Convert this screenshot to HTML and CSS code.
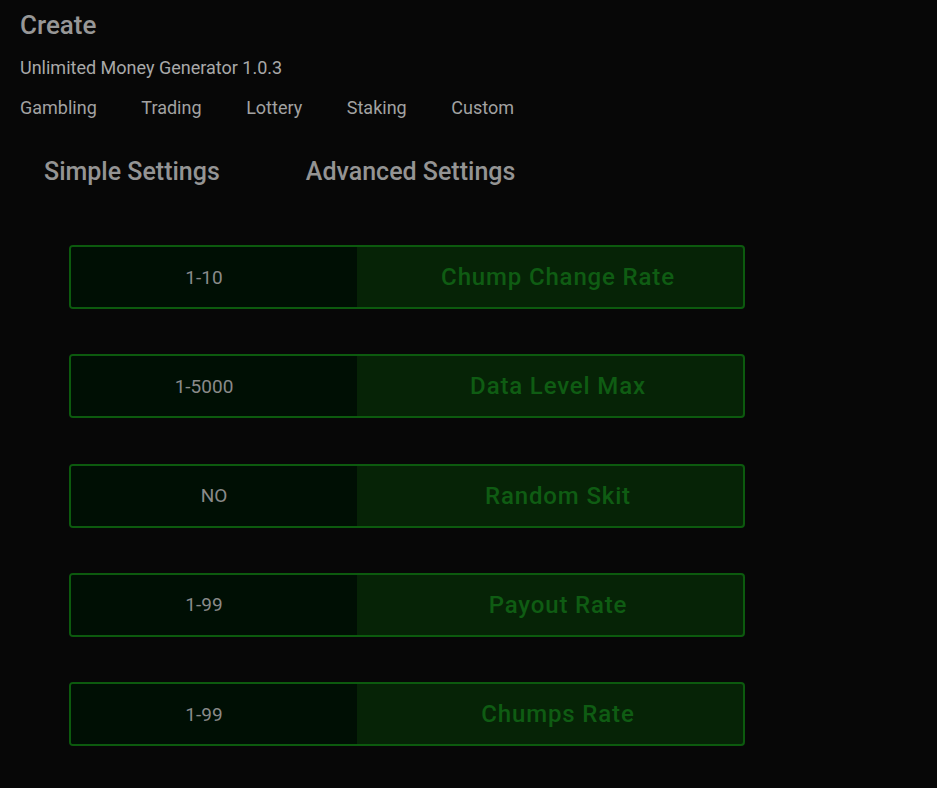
FILE: index.html
```html
<!DOCTYPE html>
<html>
<head>
<meta charset="utf-8">
<link rel="stylesheet" href="styles.css">
</head>
<body>
<div class="page">
  <h1 class="title">Create</h1>
  <div class="subtitle">Unlimited Money Generator 1.0.3</div>
  <nav class="tabs">
    <span class="tab">Gambling</span>
    <span class="tab">Trading</span>
    <span class="tab">Lottery</span>
    <span class="tab">Staking</span>
    <span class="tab">Custom</span>
  </nav>
  <div class="modes">
    <span class="mode">Simple Settings</span>
    <span class="mode">Advanced Settings</span>
  </div>
  <div class="rows">
    <div class="row"><div class="val val-num">1-10</div><div class="label">Chump Change Rate</div></div>
    <div class="row"><div class="val val-num">1-5000</div><div class="label">Data Level Max</div></div>
    <div class="row"><div class="val">NO</div><div class="label">Random Skit</div></div>
    <div class="row"><div class="val val-num">1-99</div><div class="label">Payout Rate</div></div>
    <div class="row"><div class="val val-num">1-99</div><div class="label">Chumps Rate</div></div>
  </div>
</div>
</body>
</html>
```

FILE: styles.css
```css
html, body {
  margin: 0;
  padding: 0;
  background: #070707;
  height: 100%;
}
body {
  font-family: Roboto, "Liberation Sans", sans-serif;
  color: #a6a6a6;
}
.page {
  padding: 10px 20px 0 20px;
}
.title {
  margin: 0;
  font-size: 26px;
  font-weight: 500;
  line-height: 30px;
  color: #979797;
}
.subtitle {
  margin-top: 18px;
  font-size: 18px;
  line-height: 20px;
  color: #a9a9a9;
}
.tabs {
  display: flex;
  gap: 44.6px;
  margin-top: 20px;
  font-size: 18px;
  line-height: 20px;
  color: #a2a2a2;
}
.modes {
  display: flex;
  gap: 86px;
  margin-top: 39px;
  padding-left: 24px;
  font-size: 25px;
  font-weight: 500;
  line-height: 30px;
  color: #949494;
}
.rows {
  display: flex;
  flex-direction: column;
  gap: 45.3px;
  margin-top: 58px;
  padding-left: 49px;
}
.row {
  display: flex;
  width: 672px;
  height: 60px;
  border: 2px solid #0c5a0e;
  border-radius: 4px;
  background: #062306;
  overflow: hidden;
}
.val {
  width: 286px;
  display: flex;
  align-items: center;
  justify-content: center;
  background: #000f04;
  font-size: 19px;
  color: #8a8a8a;
}
.val-num {
  padding-right: 20px;
  box-sizing: border-box;
}
.label {
  flex: 1;
  display: flex;
  align-items: center;
  justify-content: center;
  padding-left: 16px;
  font-size: 24px;
  font-weight: 500;
  letter-spacing: 0.85px;
  color: #0f5c13;
}
```
